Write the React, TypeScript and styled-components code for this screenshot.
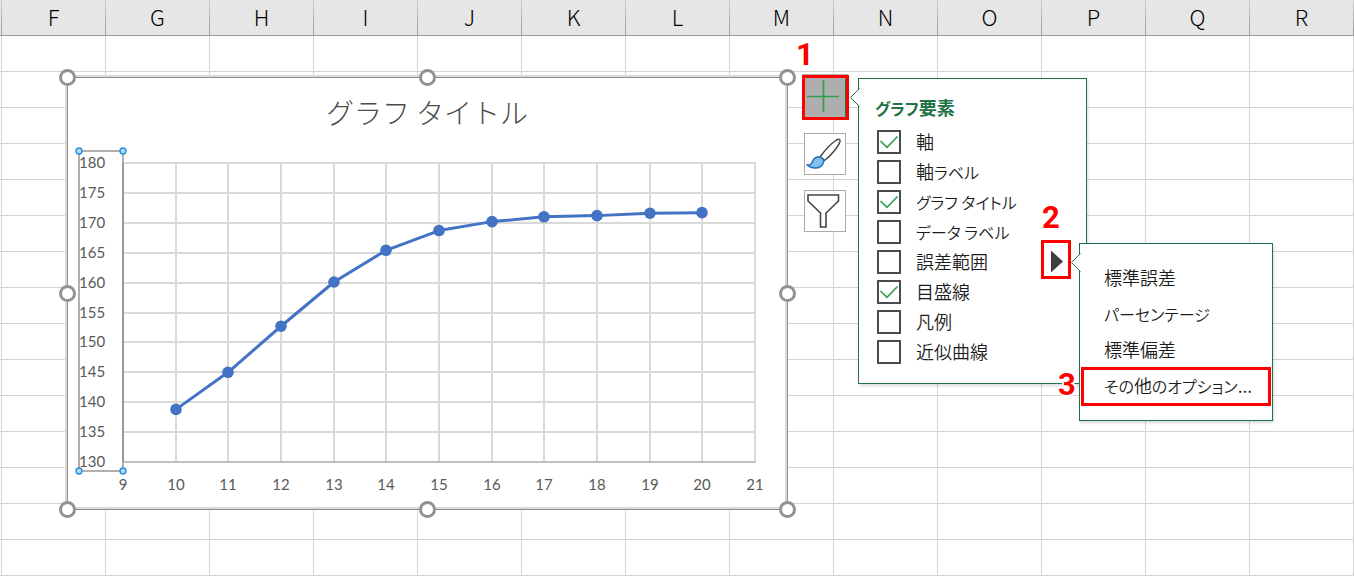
import React from "react";
import styled, { createGlobalStyle, css } from "styled-components";

const GlobalStyle = createGlobalStyle`
  *, *::before, *::after { box-sizing: border-box; }
  body {
    margin: 0;
    background: #fff;
    font-family: "Noto Sans CJK JP", sans-serif;
    color: #1c1c1c;
  }
`;

const GREEN = "#217346";
const FRAME = "#929292";
const RED = "#ff0000";

/* ---------- worksheet ---------- */

const Sheet = styled.main`
  position: relative;
  min-height: 100vh;
  overflow: hidden;
`;

const Grid = styled.table`
  width: 100%;
  table-layout: fixed;
  border-collapse: separate;
  border-spacing: 0;
`;

const EdgeCol = styled.col`
  width: 2px;
`;

const HeadCell = styled.th`
  height: 36px;
  padding: 0 1px 3px 0;
  background: linear-gradient(#cfcfcf, #9a9a9a) right / 1px 100% no-repeat #e6e6e6;
  border-bottom: 1px solid #999;
  font-size: 22px;
  line-height: 32px;
  font-weight: 300;
  color: #000;
`;

const Cell = styled.td`
  height: 36px;
  padding: 0;
  border-right: 1px solid #d4d4d4;
  border-bottom: 1px solid #d4d4d4;
`;

/* Floating objects that sit on top of the cells */
const ObjectLayer = styled.div`
  position: absolute;
  inset: 0;
  display: flex;
  align-items: flex-start;
  padding: 75px 0 0 65px;
`;

/* ---------- chart object ---------- */

const ChartFrame = styled.section`
  position: relative;
  flex: none;
  width: 722px;
  height: 434px;
  border: 2px solid #d9d9d9;
  background: #fff;
  box-shadow: inset 1px 1px 0 ${FRAME}, 1px 1px 0 ${FRAME};
`;

const ChartTitle = styled.h1`
  margin: 0;
  padding: 15px 0 0 2px;
  font-size: 28px;
  line-height: 40px;
  font-weight: 300;
  text-align: center;
  color: #4c4c4c;
`;

const Plot = styled.svg`
  display: block;
  margin-top: 12px;
  font-family: Lato, sans-serif;
  font-size: 15px;
  fill: #595959;
`;

const HandleLayer = styled.div`
  position: absolute;
  inset: 0 -2px -2px 0;
`;

const Handle = styled.span<{ $x: number; $y: number }>`
  position: absolute;
  left: ${(p) => p.$x}%;
  top: ${(p) => p.$y}%;
  width: 17px;
  height: 17px;
  margin: -8px 0 0 -8px;
  border: 3px solid ${FRAME};
  border-radius: 50%;
  background: #fff;
`;

/* ---------- buttons beside the chart ---------- */

const Tools = styled.nav`
  display: flex;
  flex: none;
  flex-direction: column;
  gap: 15px;
  margin: 1px 12px 0 17px;
`;

const ToolButton = styled.button<{ $active?: boolean }>`
  width: 42px;
  height: 42px;
  padding: 0;
  border: 1px solid #ababab;
  background: #fff;
  ${(p) =>
    p.$active &&
    css`
      border-color: #aeaeae ${GREEN} #aeaeae #aeaeae;
      background: #aeaeae;
      box-shadow: 0 0 0 2px #aeaeae;
    `}
  svg {
    display: block;
  }
`;

/* ---------- flyouts ---------- */

const Flyout = styled.section`
  border: 1px solid ${GREEN};
  background: #fff;
  box-shadow: 1px 2px 3px rgba(0, 0, 0, 0.14);
  font-size: 18px;
  font-weight: 350;
  font-feature-settings: "palt";
`;

const ElementsPanel = styled(Flyout)`
  position: relative;
  flex: none;
  width: 229px;
  margin-top: 3px;
  padding: 13px 16px 16px;
`;

const OptionsPanel = styled(Flyout)`
  position: absolute;
  left: 220px;
  top: 164px;
  width: 194px;
  padding: 16px 2px;
`;

const Notch = styled.svg`
  position: absolute;
  left: -9px;
  top: 9px;
  width: 10px;
  height: 19px;
`;

const Kana = styled.span`
  font-size: 16px;
  line-height: 16px;
`;

const PanelTitle = styled.h2`
  margin: 0 0 5px;
  font-size: 18px;
  line-height: 30px;
  font-weight: 700;
  color: ${GREEN};
`;

const Row = styled.div`
  display: flex;
  align-items: center;
  height: 30px;
  padding-left: 2px;
`;

const CheckLabel = styled.label`
  display: flex;
  flex: 1;
  align-items: flex-start;
  gap: 15px;
  line-height: 22px;
`;

const CheckHolder = styled.span`
  display: grid;
  width: 24px;
  height: 24px;
  > * {
    grid-area: 1 / 1;
  }
`;

const CheckInput = styled.input`
  appearance: none;
  width: 24px;
  height: 24px;
  margin: 0;
  border: 2px solid #4a4a4a;
  background: #fff;
  & + svg {
    visibility: hidden;
    pointer-events: none;
  }
  &:checked + svg {
    visibility: visible;
  }
`;

const ArrowButton = styled.button`
  width: 30px;
  height: 38px;
  margin: 0 -1px 0 0;
  padding: 0;
  border: 0;
  background: transparent;
  svg {
    display: block;
  }
`;

const OptionList = styled.ul`
  margin: 0;
  padding: 0;
  list-style: none;
`;

const OptionButton = styled.button`
  display: block;
  width: 100%;
  height: 36px;
  padding: 0 0 2px 22px;
  border: 0;
  background: transparent;
  font: inherit;
  font-feature-settings: inherit;
  line-height: 34px;
  text-align: left;
  white-space: nowrap;
  color: inherit;
`;

/* ---------- step annotations ---------- */

const StepBox = styled.div<{ $x: number; $y: number; $w: number; $h: number }>`
  position: absolute;
  left: ${(p) => p.$x}px;
  top: ${(p) => p.$y}px;
  width: ${(p) => p.$w}px;
  height: ${(p) => p.$h}px;
  border: 3px solid ${RED};
  pointer-events: none;
`;

const StepNumber = styled.strong<{ $x: number; $y: number }>`
  position: absolute;
  left: ${(p) => p.$x}px;
  top: ${(p) => p.$y}px;
  font-family: Roboto, Arial, sans-serif;
  font-size: 31px;
  line-height: 32px;
  color: ${RED};
  paint-order: stroke fill;
  -webkit-text-stroke: 4px #fff;
`;

/* ---------- data ---------- */

const columns = ["F", "G", "H", "I", "J", "K", "L", "M", "N", "O", "P", "Q", "R"];
const rows = Array.from({ length: 15 }, (_, i) => i);

const heights = [138.8, 145, 152.7, 160.1, 165.4, 168.7, 170.2, 171, 171.2, 171.6, 171.7];
const xTicks = Array.from({ length: 13 }, (_, i) => 9 + i);
const yTicks = Array.from({ length: 11 }, (_, i) => 180 - i * 5);

const elements = [
  { name: "軸", on: true },
  { name: "軸ラベル", on: false },
  { name: "グラフ タイトル", on: true },
  { name: "データ ラベル", on: false },
  { name: "誤差範囲", on: false, more: true },
  { name: "目盛線", on: true },
  { name: "凡例", on: false },
  { name: "近似曲線", on: false },
];

const options = ["標準誤差", "パーセンテージ", "標準偏差", "その他のオプション..."];

/* UI labels set kana slightly smaller than kanji */
function UiText({ children }: { children: string }) {
  const runs = children.match(/[\u3040-\u30ff ]+|[^\u3040-\u30ff ]+/g) ?? [];
  return (
    <span>
      {runs.map((run, i) => (/[\u3040-\u30ff]/.test(run) ? <Kana key={i}>{run}</Kana> : run))}
    </span>
  );
}

const px = (age: number) => Math.round(56 + ((age - 9) * 632) / 12);
const py = (value: number) => 19 + ((180 - value) * 299) / 50;

function GrowthPlot() {
  const points = heights.map((h, i) => [px(10 + i), py(h)] as const);
  return (
    <Plot width="718" height="360" viewBox="0 0 718 360" role="img" aria-label="グラフ">
      <g stroke="#d9d9d9" strokeWidth="2">
        {yTicks.map((t) => (
          <line key={t} x1="56" x2="689" y1={Math.round(py(t))} y2={Math.round(py(t))} />
        ))}
        {xTicks.map((t) => (
          <line key={t} x1={px(t)} x2={px(t)} y1="18" y2="318" />
        ))}
      </g>
      <line x1="56" x2="688" y1="318" y2="318" stroke="#bfbfbf" strokeWidth="2" />
      <rect x="12" y="7" width="44" height="320" fill="none" stroke="#b0b0b0" strokeWidth="2" />
      <line x1="56" x2="56" y1="19" y2="318" stroke="#999" strokeWidth="2" />
      {yTicks.map((t) => (
        <text key={t} x="12" y={Math.round(py(t)) + 5}>
          {t}
        </text>
      ))}
      {xTicks.map((t) => (
        <text key={t} x={px(t)} y="346" textAnchor="middle">
          {t}
        </text>
      ))}
      <polyline
        points={points.map((p) => p.join(",")).join(" ")}
        fill="none"
        stroke="#4472c4"
        strokeWidth="3"
        strokeLinejoin="round"
      />
      {points.map(([x, y]) => (
        <circle key={x} cx={x} cy={y} r="5.8" fill="#4472c4" />
      ))}
      {[12, 56].map((x) =>
        [7, 327].map((y) => (
          <circle key={`${x}-${y}`} cx={x} cy={y} r="3" fill="#b5d9f3" stroke="#2a8dd8" strokeWidth="1.4" />
        ))
      )}
    </Plot>
  );
}

const PanelNotch = () => (
  <Notch viewBox="0 0 10 19" aria-hidden="true">
    <path d="M10 0.5 H9.5 L0.5 9.5 L9.5 18.5 H10 Z" fill="#fff" />
    <path d="M9.5 0.5 L0.5 9.5 L9.5 18.5" fill="none" stroke={GREEN} />
  </Notch>
);

export default function App() {
  return (
    <Sheet>
      <GlobalStyle />
      <Grid>
        <colgroup>
          <EdgeCol />
          {columns.map((c) => (
            <col key={c} />
          ))}
        </colgroup>
        <thead>
          <tr>
            <HeadCell as="td" />
            {columns.map((c) => (
              <HeadCell key={c} scope="col">
                {c}
              </HeadCell>
            ))}
          </tr>
        </thead>
        <tbody>
          {rows.map((r) => (
            <tr key={r}>
              <Cell />
              {columns.map((c) => (
                <Cell key={c} />
              ))}
            </tr>
          ))}
        </tbody>
      </Grid>

      <ObjectLayer>
        <ChartFrame>
          <ChartTitle>グラフ タイトル</ChartTitle>
          <GrowthPlot />
          <HandleLayer>
            {[0, 50, 100].flatMap((x) =>
              [0, 50, 100]
                .filter((y) => !(x === 50 && y === 50))
                .map((y) => <Handle key={`${x}-${y}`} $x={x} $y={y} />)
            )}
          </HandleLayer>
        </ChartFrame>

        <Tools aria-label="グラフ ツール">
          <ToolButton $active aria-label="グラフ要素">
            <svg width="40" height="40" viewBox="1 1 40 40" fill="none" stroke="#2f9e4b" strokeWidth="1.6">
              <path d="M3 20.5 H35 M19.5 4 V36" />
            </svg>
          </ToolButton>
          <ToolButton aria-label="グラフ スタイル">
            <svg width="40" height="40" viewBox="1 1 40 40" fill="none" strokeWidth="1.5" strokeLinejoin="round">
              <path
                d="M16 24 C20 18.500 28 10 32.500 7 C34.500 5.800 36.500 6 36 8.500 C34.500 13.500 26.500 23 20.500 27.500 Z"
                fill="#fff"
                stroke="#444"
              />
              <path
                d="M3 31.800 C7 32.500 7.500 30.500 9 27.500 C10.500 24.500 13 23.600 15.500 24 C18.500 24.600 20 26.500 19.600 29 C19 32.500 15.500 35 11.500 35 C8 35 5 34 3 31.800 Z"
                fill="#83beec"
                stroke="#1f6fbe"
              />
            </svg>
          </ToolButton>
          <ToolButton aria-label="グラフ フィルター">
            <svg width="40" height="40" viewBox="1 1 40 40" fill="none" stroke="#444" strokeWidth="1.6">
              <path d="M4 5 H34.500 V11 L22 23 V37 H16.500 V23 L4 11 Z" />
            </svg>
          </ToolButton>
        </Tools>

        <ElementsPanel>
          <PanelNotch />
          <PanelTitle>
            <UiText>グラフ要素</UiText>
          </PanelTitle>
          {elements.map((e) => (
            <Row key={e.name}>
              <CheckLabel>
                <CheckHolder>
                  <CheckInput type="checkbox" defaultChecked={e.on} />
                  <svg width="24" height="24" viewBox="0 0 24 24" fill="none" stroke="#2f9e4b" strokeWidth="1.6">
                    <path d="M3.500 11 L10 17.300 L20.500 6.500" />
                  </svg>
                </CheckHolder>
                <UiText>{e.name}</UiText>
              </CheckLabel>
              {e.more && (
                <ArrowButton aria-label="誤差範囲のオプション">
                  <svg width="30" height="38" viewBox="0 0 30 38" fill="#3f3f3f">
                    <path d="M10 7.500 L22 18.500 L10 29.500 Z" />
                  </svg>
                </ArrowButton>
              )}
            </Row>
          ))}

          <OptionsPanel>
            <PanelNotch />
            <OptionList>
              {options.map((o) => (
                <li key={o}>
                  <OptionButton>
                    <UiText>{o}</UiText>
                  </OptionButton>
                </li>
              ))}
            </OptionList>
          </OptionsPanel>
        </ElementsPanel>
      </ObjectLayer>

      <StepBox $x={802} $y={75} $w={47} $h={45} />
      <StepBox $x={1041} $y={240} $w={30} $h={39} />
      <StepBox $x={1081} $y={367} $w={190} $h={39} />
      <StepNumber $x={796} $y={39}>1</StepNumber>
      <StepNumber $x={1042} $y={202}>2</StepNumber>
      <StepNumber $x={1058} $y={369}>3</StepNumber>
    </Sheet>
  );
}
